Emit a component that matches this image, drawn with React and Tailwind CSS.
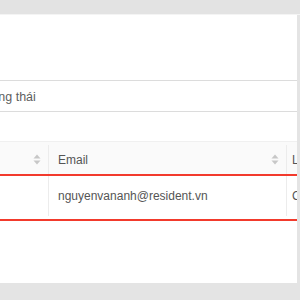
import React from 'react';

function SortIcon() {
  return (
    <svg width="8" height="11" viewBox="0 0 8 11" className="shrink-0">
      <path d="M4 0.5 L7.5 4.5 H0.5 Z" fill="#c7c7c7" />
      <path d="M4 10.5 L7.5 6.5 H0.5 Z" fill="#c7c7c7" />
    </svg>
  );
}

export default function App() {
  return (
    <div className="h-[300px] w-[300px] overflow-hidden bg-[#e4e4e4] font-['Liberation_Sans',Arial,sans-serif]">
      <div className="h-[14px] bg-[#e3e3e3]" />
      <div className="h-px bg-[#f4f4f4]" />
      <div className="relative h-[268px] w-[297px] overflow-hidden bg-white">
        <div className="h-[65px]" />
        <div className="flex h-[32px] items-center border-y border-[#dcdcdc] pt-[2px] text-[12.5px] text-[#5e5e5e]">
          <span className="-ml-[20px] whitespace-nowrap">Trạng thái</span>
        </div>
        <div className="h-[29px]" />
        <div className="-mr-[40px]">
          <div className="flex h-[33px] border-t border-[#f0f0f0] bg-[#fafafa] pt-[3px] text-[12px] text-[#555]">
            <div className="flex w-[49px] shrink-0 items-center justify-end border-r border-[#ececec] pr-[7px]">
              <SortIcon />
            </div>
            <div className="flex w-[238px] shrink-0 items-center justify-between border-r border-[#ececec] pl-[9px] pr-[7px]">
              <span>Email</span>
              <SortIcon />
            </div>
            <div className="flex min-w-0 flex-1 items-center whitespace-nowrap pl-[5px]">
              <span>Loại</span>
            </div>
          </div>
          <div className="-ml-[4px] flex h-[47px] border-y-2 border-[#f23a2c] pb-[3px] text-[12px] text-[#555]">
            <div className="w-[53px] shrink-0 border-r border-[#ececec]" />
            <div className="flex w-[238px] shrink-0 items-center border-r border-[#ececec] pl-[9px]">
              <span className="whitespace-nowrap">nguyenvananh@resident.vn</span>
            </div>
            <div className="flex min-w-0 flex-1 items-center whitespace-nowrap pl-[5px]">
              <span>Cư dân</span>
            </div>
          </div>
        </div>
      </div>
    </div>
  );
}
